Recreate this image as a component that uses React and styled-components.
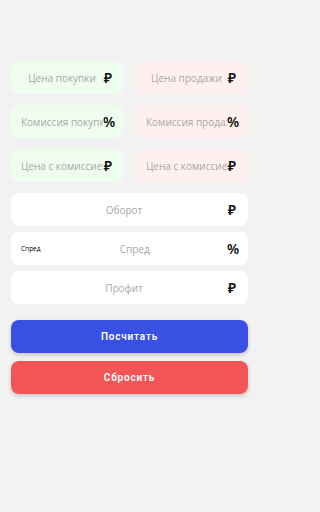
import React from 'react'
import styled, { createGlobalStyle } from 'styled-components'

const GlobalStyle = createGlobalStyle`
  html, body {
    margin: 0;
    padding: 0;
    background: #f2f2f2;
  }
  body {
    font-family: "Open Sans", "Noto Sans", sans-serif;
  }
`

const Page = styled.div`
  width: 259px;
  min-height: 512px;
  padding: 61px 11px 0 11px;
  box-sizing: border-box;
  display: flex;
  flex-direction: column;
`

const Grid = styled.div`
  display: grid;
  grid-template-columns: 113px 112px;
  column-gap: 12px;
  row-gap: 11px;
  margin-bottom: 11px;
`

const Field = styled.label`
  display: flex;
  align-items: center;
  height: 33px;
  box-sizing: border-box;
  padding: 0 11px 0 10px;
  border-radius: 8px;
  background: ${p => p.$tone === 'buy' ? '#effdef' : p.$tone === 'sell' ? '#fff0f0' : '#ffffff'};
`

const Input = styled.input`
  flex: 1;
  width: 0;
  min-width: 0;
  border: none;
  outline: none;
  background: transparent;
  text-align: center;
  font-family: "Open Sans", "Noto Sans", sans-serif;
  font-size: 10px;
  color: #333;
  padding: 0;
  &::placeholder {
    color: #a8a8a8;
  }
`

const Label = styled.span`
  font-family: "Open Sans", "Noto Sans", sans-serif;
  font-size: 6.5px;
  font-weight: 500;
  color: #000;
  margin-right: 2px;
`

const Unit = styled.span`
  flex: none;
  width: 10px;
  text-align: center;
  font-family: "Noto Sans", "DejaVu Sans", sans-serif;
  font-size: 14px;
  font-weight: 600;
  color: #111;
  line-height: 1;
`

const Stack = styled.div`
  display: flex;
  flex-direction: column;
  gap: 6px;
`

const Buttons = styled.div`
  display: flex;
  flex-direction: column;
  gap: 8px;
  margin-top: 16px;
`

const Button = styled.button`
  height: 33px;
  border: none;
  border-radius: 8px;
  background: ${p => p.$danger ? '#f25555' : '#3a50e2'};
  color: #fff;
  font-family: Roboto, "Liberation Sans", sans-serif;
  font-weight: 600;
  font-size: 10px;
  letter-spacing: 0.8px;
  box-shadow: 0 2px 4px rgba(0, 0, 0, 0.18);
  cursor: pointer;
`

const RUB = '₽'

const App = () => {
    return (
        <>
            <GlobalStyle />
            <Page>
                <Grid>
                    <Field $tone="buy">
                        <Input placeholder="Цена покупки" />
                        <Unit>{RUB}</Unit>
                    </Field>
                    <Field $tone="sell">
                        <Input placeholder="Цена продажи" />
                        <Unit>{RUB}</Unit>
                    </Field>
                    <Field $tone="buy">
                        <Input placeholder="Комиссия покупки" />
                        <Unit>%</Unit>
                    </Field>
                    <Field $tone="sell">
                        <Input placeholder="Комиссия продажи" />
                        <Unit>%</Unit>
                    </Field>
                    <Field $tone="buy">
                        <Input placeholder="Цена с комиссией" />
                        <Unit>{RUB}</Unit>
                    </Field>
                    <Field $tone="sell">
                        <Input placeholder="Цена с комиссией" />
                        <Unit>{RUB}</Unit>
                    </Field>
                </Grid>
                <Stack>
                    <Field>
                        <Input placeholder="Оборот" />
                        <Unit>{RUB}</Unit>
                    </Field>
                    <Field>
                        <Label>Спред</Label>
                        <Input placeholder="Спред" />
                        <Unit>%</Unit>
                    </Field>
                    <Field>
                        <Input placeholder="Профит" />
                        <Unit>{RUB}</Unit>
                    </Field>
                </Stack>
                <Buttons>
                    <Button>Посчитать</Button>
                    <Button $danger>Сбросить</Button>
                </Buttons>
            </Page>
        </>
    )
}

export default App
